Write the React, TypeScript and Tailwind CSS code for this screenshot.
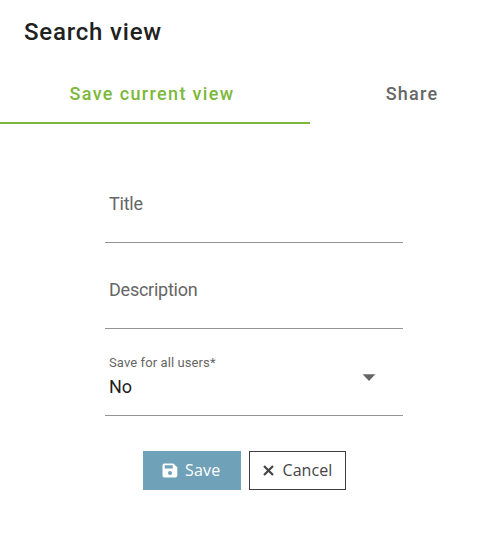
import React from 'react';

type FieldProps = {
  label: string;
};

const TextField = ({ label }: FieldProps) => (
  <label className="flex items-start w-full h-[53px] pl-1 border-b border-[#949494] text-[18px] leading-7 tracking-[-0.24px] text-[#666666]">
    {label}
  </label>
);

const SaveViewDialog = () => {
  return (
    <div className="w-[504px] h-[536px] overflow-hidden bg-white font-['Roboto',sans-serif]">
      <h1 className="pt-4 pl-6 text-2xl leading-8 font-medium tracking-[0.8px] text-[#212121]">Search view</h1>

      <div className="flex mt-4 w-full h-[60px] text-[18px] font-medium">
        <button className="w-[310px] shrink-0 pr-[6px] border-b-2 border-[#7cb83b] tracking-[1.35px] text-[#7cb83b]">
          Save current view
        </button>
        <button className="w-[204px] shrink-0 border-b-2 border-transparent tracking-[1.25px] text-[#666666]">
          Share
        </button>
      </div>

      <div className="flex flex-col w-[298px] ml-[105px] pt-[66px]">
        <TextField label="Title" />
        <div className="pt-[33px]">
          <TextField label="Description" />
        </div>
        <div className="flex justify-between h-[61px] mt-[26px] pl-1 pr-[27px] border-b border-[#949494]">
          <div className="flex flex-col">
            <span className="text-[13px] leading-4 tracking-[0.1px] text-[#666666]">Save for all users*</span>
            <span className="text-[18px] leading-8 tracking-[-0.2px] text-[#212121]">No</span>
          </div>
          <svg className="mt-[19px] w-[14px] h-[7px]" viewBox="0 0 14 7" fill="#666666">
            <path d="M.6.3h12.8L7 7z" />
          </svg>
        </div>
      </div>

      <div className="flex gap-2 mt-[35px] ml-[143px] font-['Open_Sans',sans-serif] text-base">
        <button className="flex items-center w-[98px] h-[39px] pl-[19px] pb-px gap-[7px] bg-[#6fa1b8] tracking-[0.2px] text-white">
          <svg className="w-4 h-[15px]" viewBox="0 0 16 15" fill="currentColor">
            <path fillRule="evenodd" d="M2.2.5h9.1l4 3.7v8.6a1.7 1.7 0 0 1-1.7 1.7H2.2a1.7 1.7 0 0 1-1.7-1.7V2.2A1.7 1.7 0 0 1 2.2.5zM2.7 2.3v3.200h8V2.3zM8 8a2 2 0 1 0 0 4 2 2 0 0 0 0-4z" />
          </svg>
          Save
        </button>
        <button className="flex items-center w-[97px] h-[39px] pl-[13px] pb-px gap-[8.5px] border border-[#3d3d3d] tracking-[0.05px] text-[#444444]">
          <svg className="w-[11px] h-[11px]" viewBox="0 0 11 11" stroke="currentColor" strokeWidth="2.2">
            <path d="M1 1l9 9M10 1l-9 9" />
          </svg>
          Cancel
        </button>
      </div>
    </div>
  );
};

export default SaveViewDialog;
